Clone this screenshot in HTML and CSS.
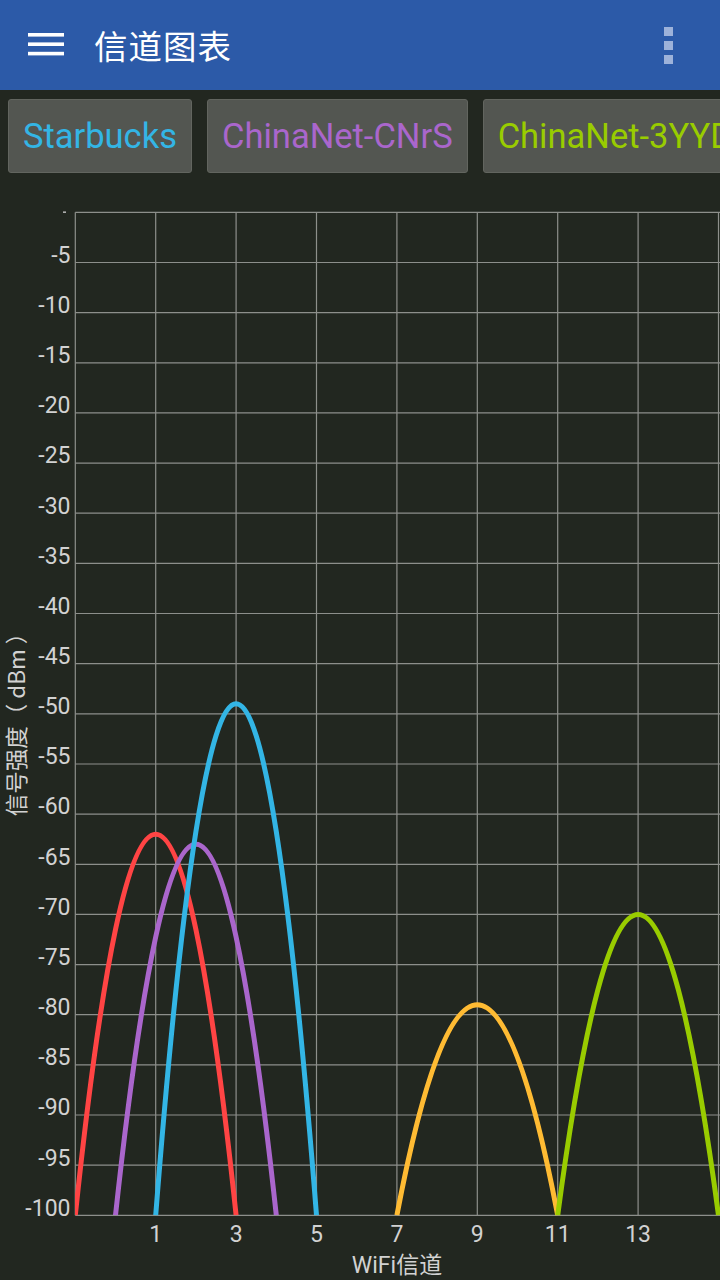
FILE: index.html
```html
<!DOCTYPE html>
<html>
<head>
<meta charset="utf-8">
<link rel="stylesheet" href="styles.css">
</head>
<body>
<header class="appbar">
  <svg class="menu" width="36" height="24" viewBox="0 0 36 24">
    <rect x="0" y="0" width="36" height="3.6" fill="#fff"/>
    <rect x="0" y="9.4" width="36" height="3.6" fill="#fff"/>
    <rect x="0" y="18.8" width="36" height="3.6" fill="#fff"/>
  </svg>
  <h1 class="title">信道图表</h1>
  <svg class="more" width="9" height="37" viewBox="0 0 9 37">
    <rect x="0" y="0" width="9" height="9" fill="#9db2da"/>
    <rect x="0" y="14" width="9" height="9" fill="#9db2da"/>
    <rect x="0" y="28" width="9" height="9" fill="#9db2da"/>
  </svg>
</header>
<nav class="tabs">
  <div class="tab tab-blue">Starbucks</div>
  <div class="tab tab-purple">ChinaNet-CNrS</div>
  <div class="tab tab-green">ChinaNet-3YYD</div>
</nav>
<svg class="chart" width="720" height="1107" viewBox="0 173 720 1107">
  <defs>
    <clipPath id="plot"><rect x="75" y="200" width="660" height="1015.5"/></clipPath>
  </defs>
  <g class="grid" stroke="#8d8f8b" stroke-width="1.2">
    <line x1="75.3" y1="212.3" x2="720" y2="212.3"/>
    <line x1="75.3" y1="262.5" x2="720" y2="262.5"/>
    <line x1="75.3" y1="312.6" x2="720" y2="312.6"/>
    <line x1="75.3" y1="362.8" x2="720" y2="362.8"/>
    <line x1="75.3" y1="412.9" x2="720" y2="412.9"/>
    <line x1="75.3" y1="463.1" x2="720" y2="463.1"/>
    <line x1="75.3" y1="513.2" x2="720" y2="513.2"/>
    <line x1="75.3" y1="563.4" x2="720" y2="563.4"/>
    <line x1="75.3" y1="613.5" x2="720" y2="613.5"/>
    <line x1="75.3" y1="663.7" x2="720" y2="663.7"/>
    <line x1="75.3" y1="713.8" x2="720" y2="713.8"/>
    <line x1="75.3" y1="764.0" x2="720" y2="764.0"/>
    <line x1="75.3" y1="814.1" x2="720" y2="814.1"/>
    <line x1="75.3" y1="864.3" x2="720" y2="864.3"/>
    <line x1="75.3" y1="914.4" x2="720" y2="914.4"/>
    <line x1="75.3" y1="964.6" x2="720" y2="964.6"/>
    <line x1="75.3" y1="1014.7" x2="720" y2="1014.7"/>
    <line x1="75.3" y1="1064.9" x2="720" y2="1064.9"/>
    <line x1="75.3" y1="1115.0" x2="720" y2="1115.0"/>
    <line x1="75.3" y1="1165.2" x2="720" y2="1165.2"/>
    <line x1="75.3" y1="1215.3" x2="720" y2="1215.3"/>
    <line x1="75.3" y1="212.3" x2="75.3" y2="1215.3"/>
    <line x1="155.7" y1="212.3" x2="155.7" y2="1215.3"/>
    <line x1="236.1" y1="212.3" x2="236.1" y2="1215.3"/>
    <line x1="316.5" y1="212.3" x2="316.5" y2="1215.3"/>
    <line x1="396.9" y1="212.3" x2="396.9" y2="1215.3"/>
    <line x1="477.3" y1="212.3" x2="477.3" y2="1215.3"/>
    <line x1="557.7" y1="212.3" x2="557.7" y2="1215.3"/>
    <line x1="638.1" y1="212.3" x2="638.1" y2="1215.3"/>
    <line x1="718.5" y1="212.3" x2="718.5" y2="1215.3"/>
  </g>
  <rect x="63" y="211.5" width="3" height="1.3" fill="#cfcfcf"/>
  <g class="ylabels">
    <text x="70.5" y="262.8">-5</text>
    <text x="70.5" y="312.9">-10</text>
    <text x="70.5" y="363.1">-15</text>
    <text x="70.5" y="413.2">-20</text>
    <text x="70.5" y="463.4">-25</text>
    <text x="70.5" y="513.5">-30</text>
    <text x="70.5" y="563.7">-35</text>
    <text x="70.5" y="613.8">-40</text>
    <text x="70.5" y="664.0">-45</text>
    <text x="70.5" y="714.1">-50</text>
    <text x="70.5" y="764.3">-55</text>
    <text x="70.5" y="814.4">-60</text>
    <text x="70.5" y="864.6">-65</text>
    <text x="70.5" y="914.7">-70</text>
    <text x="70.5" y="964.9">-75</text>
    <text x="70.5" y="1015.0">-80</text>
    <text x="70.5" y="1065.2">-85</text>
    <text x="70.5" y="1115.3">-90</text>
    <text x="70.5" y="1165.5">-95</text>
    <text x="70.5" y="1215.6">-100</text>
  </g>
  <g class="xlabels">
    <text x="155.7" y="1241.8">1</text>
    <text x="236.1" y="1241.8">3</text>
    <text x="316.5" y="1241.8">5</text>
    <text x="396.9" y="1241.8">7</text>
    <text x="477.3" y="1241.8">9</text>
    <text x="557.7" y="1241.8">11</text>
    <text x="638.1" y="1241.8">13</text>
  </g>
  <text class="xtitle" x="397" y="1273">WiFi信道</text>
  <text class="ytitle" transform="translate(25 719) rotate(-90)">信号强度（ dBm ）</text>
  <g clip-path="url(#plot)" fill="none" stroke-width="5" stroke-linecap="butt">
    <path d="M75.3 1215.3 Q155.7 453.1 236.1 1215.3" stroke="#ff4444"/>
    <path d="M115.5 1215.3 Q195.9 473.1 276.3 1215.3" stroke="#aa66cc"/>
    <path d="M155.7 1215.3 Q236.1 192.3 316.5 1215.3" stroke="#33b5e5"/>
    <path d="M396.9 1215.3 Q477.3 794.1 557.7 1215.3" stroke="#ffbb33"/>
    <path d="M557.7 1215.3 Q638.1 613.5 718.5 1215.3" stroke="#99cc00"/>
  </g>
</svg>
</body>
</html>
```

FILE: styles.css
```css
html, body {
  margin: 0;
  padding: 0;
}
body {
  width: 720px;
  height: 1280px;
  overflow: hidden;
  background: #222720;
  font-family: Roboto, "Noto Sans CJK SC", sans-serif;
}
.appbar {
  height: 90px;
  background: #2c5aa8;
  display: flex;
  align-items: center;
  padding: 0 47px 0 28px;
  box-sizing: border-box;
}
.menu {
  display: block;
  flex-shrink: 0;
}
.title {
  margin: 0 0 0 30px;
  flex: 1;
  color: #ffffff;
  font-family: "Noto Sans CJK SC", sans-serif;
  font-size: 33.5px;
  font-weight: 400;
  line-height: 1;
  letter-spacing: 1px;
}
.more {
  display: block;
  flex-shrink: 0;
}
.tabs {
  display: flex;
  gap: 15px;
  padding: 9px 0 0 8px;
  overflow: hidden;
  white-space: nowrap;
}
.tab {
  flex-shrink: 0;
  height: 74px;
  box-sizing: border-box;
  padding: 0 14px;
  border: 1px solid #62655f;
  border-radius: 3px;
  background: #535651;
  font-size: 34.5px;
  line-height: 72px;
}
.tab-blue { color: #33b5e5; }
.tab-purple { color: #aa66cc; }
.tab-green { color: #99cc00; }
.chart {
  display: block;
}
.ylabels text {
  font-family: Roboto, sans-serif;
  font-size: 23px;
  fill: #d2d2d2;
  text-anchor: end;
}
.xlabels text {
  font-family: Roboto, sans-serif;
  font-size: 23px;
  fill: #d2d2d2;
  text-anchor: middle;
}
.xtitle {
  font-family: Roboto, "Noto Sans CJK SC", sans-serif;
  font-size: 23px;
  fill: #d2d2d2;
  text-anchor: middle;
}
.ytitle {
  font-family: "Noto Sans CJK SC", Roboto, sans-serif;
  font-size: 22.5px;
  fill: #d2d2d2;
  text-anchor: middle;
}
```
